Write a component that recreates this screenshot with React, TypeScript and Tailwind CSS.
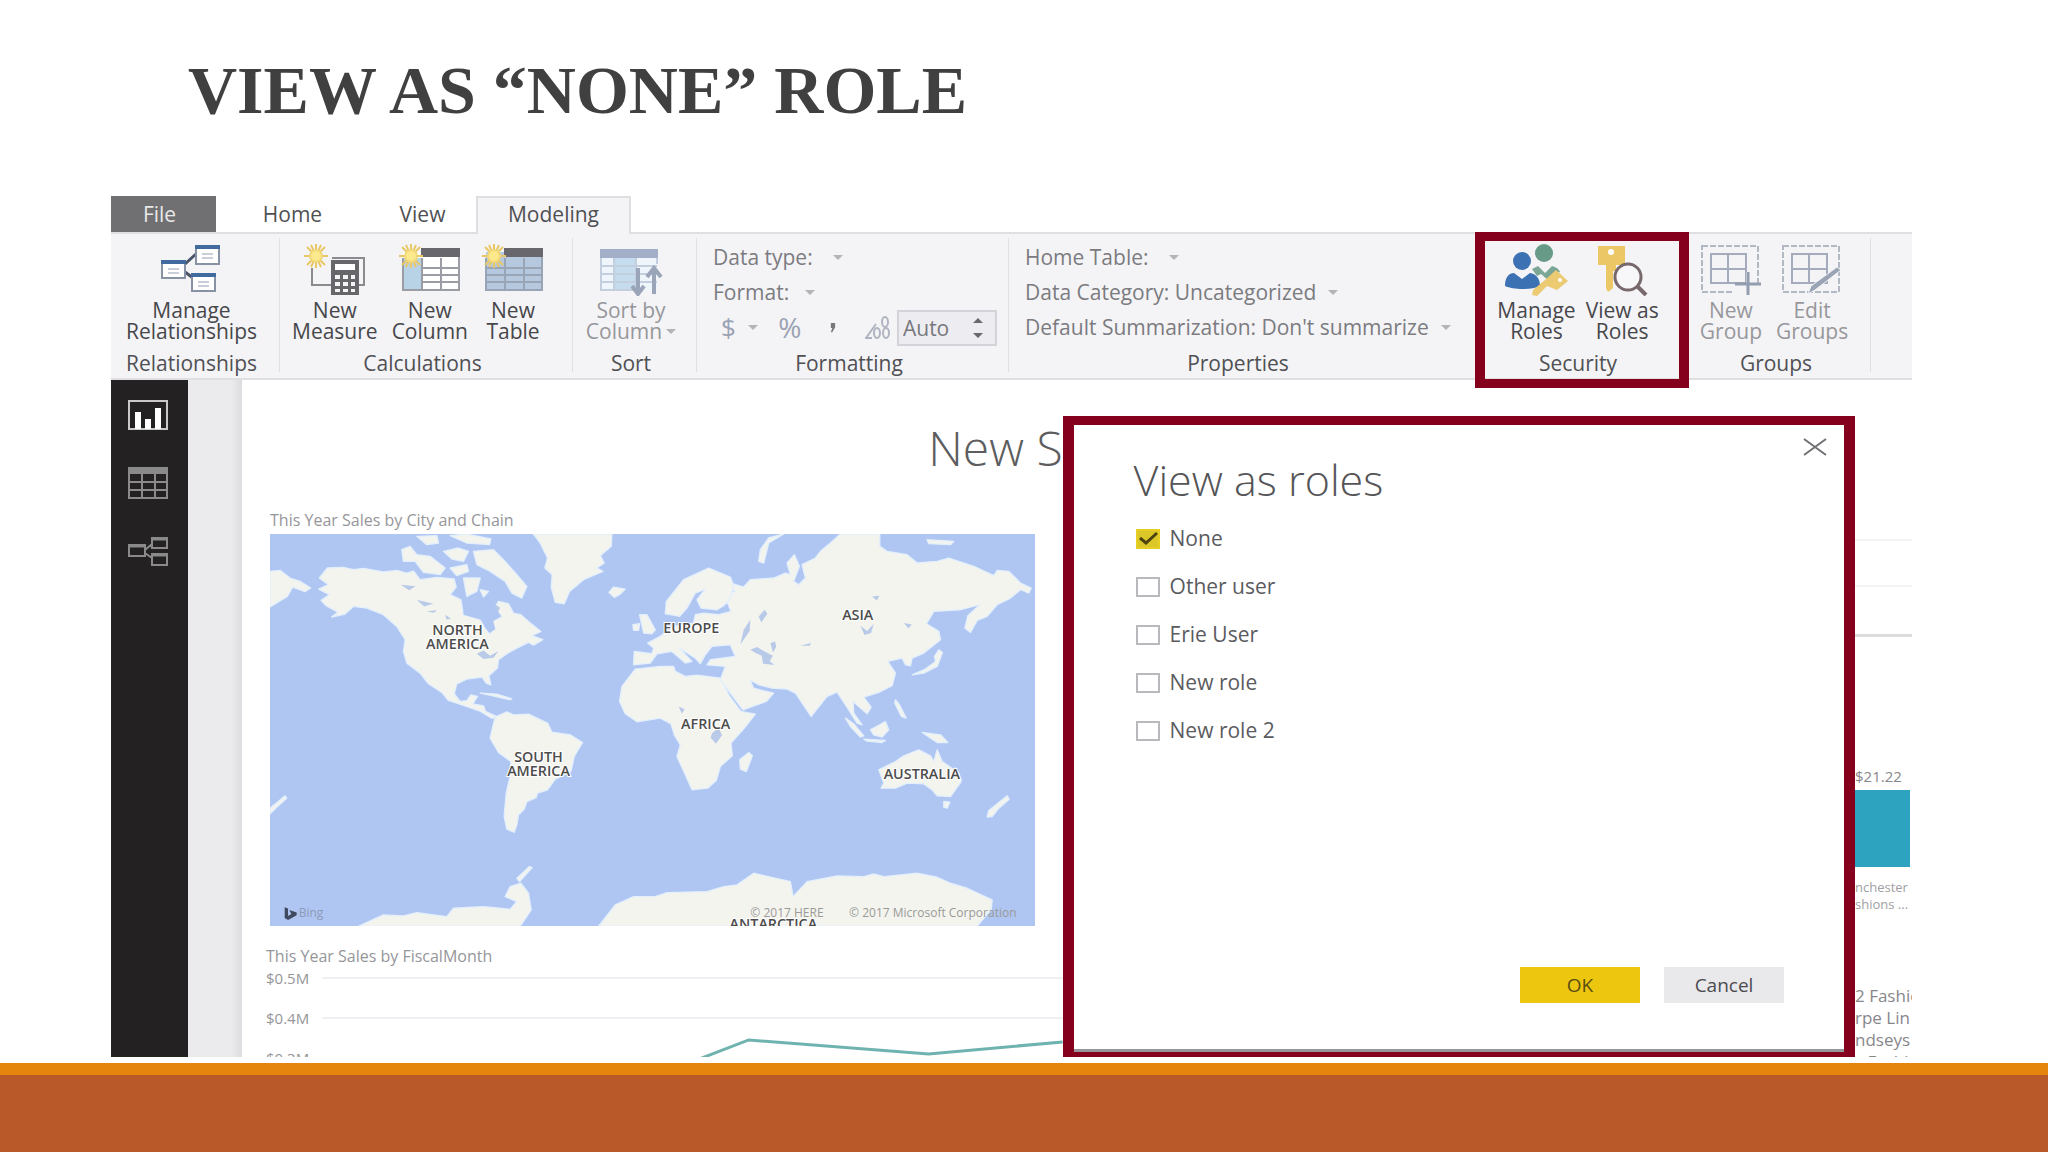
import type { ReactNode } from 'react';

const roles = ['None', 'Other user', 'Erie User', 'New role', 'New role 2'];

function Sun() {
  return (
    <g stroke="#e8c766" strokeWidth="2">
      <path d="M12 0v24M0 12h24M3 3l18 18M21 3L3 21M7 1l10 22M17 1L7 23" />
      <circle cx="12" cy="12" r="6" fill="#fbe98c" stroke="#f0d77a" />
    </g>
  );
}

function RelationshipsIcon() {
  return (
    <svg width="62" height="52" viewBox="0 0 62 52" fill="none" aria-hidden="true">
      <path d="M25 20L36 10M25 28l8 6" stroke="#4a5568" strokeWidth="3" />
      <g fill="#fff" stroke="#8793a5" strokeWidth="2">
        <path d="M36 2h23v18H36zM2 17h23v17H2zM32 30h23v17H32z" />
      </g>
      <path d="M35 1h25v4H35zM1 16h25v4H1zM31 29h25v4H31z" fill="#416a9f" />
      <path d="M42 10h11M42 14h11M8 25h11M8 29h11M38 38h11M38 42h11" stroke="#c9ced8" strokeWidth="2" />
    </svg>
  );
}

function MeasureIcon() {
  return (
    <svg width="62" height="52" viewBox="0 0 62 52" fill="none" aria-hidden="true">
      <path d="M8 24v17h20M28 14h32v27h-5" stroke="#8b8b8f" strokeWidth="2" />
      <path d="M27 16h28v35H27z" fill="#67676b" />
      <path d="M31 20h20v6H31z" fill="#fff" />
      <path d="M31 31h5v4h-5zM39 31h5v4h-5zM47 31h4v4h-4zM31 38h5v4h-5zM39 38h5v4h-5zM47 38h4v4h-4zM31 45h5v3h-5zM39 45h5v3h-5zM47 45h4v3h-4z" fill="#f4f4f5" />
      <Sun />
    </svg>
  );
}

function ColumnIcon() {
  return (
    <svg width="62" height="52" viewBox="0 0 62 52" fill="none" aria-hidden="true">
      <path d="M4 8h56v38H4z" fill="#fff" />
      <path d="M4 14h19v32H4z" fill="#b9d3e6" />
      <path d="M4 14v32h56V8M23 24h37M23 31h37M23 38h37M42 14v32M23 14v32" stroke="#9a9da3" strokeWidth="2" />
      <path d="M22 4h39v9H22z" fill="#67676d" />
      <Sun />
    </svg>
  );
}

function TableIcon() {
  return (
    <svg width="62" height="52" viewBox="0 0 62 52" fill="none" aria-hidden="true">
      <path d="M4 8h56v38H4z" fill="#b5c8de" />
      <path d="M4 14v32h56V8M4 24h56M4 31h56M4 38h56M42 14v32M23 14v32" stroke="#98a5b6" strokeWidth="2" />
      <path d="M22 4h39v9H22z" fill="#67676d" />
      <Sun />
    </svg>
  );
}

function SortIcon() {
  return (
    <svg width="64" height="52" viewBox="0 0 64 52" fill="none" aria-hidden="true">
      <path d="M2 8h56v38H2z" fill="#eef5fb" />
      <path d="M15 14h22v32H15z" fill="#c5dbee" />
      <path d="M2 22h56M2 30h56M2 38h56M15 12v34M37 12v34M2 8v38h34M58 8v12" stroke="#c3cfdf" strokeWidth="2" />
      <path d="M1 5h58v9H1z" fill="#a3afc9" />
      <path d="M39 24v25M33 42l6 8 6-8M55 50V25M48 33l7-9 7 9" stroke="#9aa5ba" strokeWidth="4" />
    </svg>
  );
}

function ManageRolesIcon() {
  return (
    <svg width="64" height="52" viewBox="0 0 64 52" fill="none" aria-hidden="true">
      <circle cx="40" cy="9" r="9" fill="#679a87" />
      <path d="M28 25l6-3 7 7 7-7c4 1 7 3 8 6l-8 3-4 5-7-6-4 2z" fill="#7ba594" />
      <circle cx="18" cy="17" r="9" fill="#3c72b4" />
      <path d="M1 42c0-9 4-13 9-13l8 6 8-6c6 1 10 5 10 13-8 4-27 4-35 0z" fill="#3c72b4" />
      <path d="M52 26l12 11-11 9-10-4-10 10-5-1 1-5 12-10z" fill="#ebca72" />
      <circle cx="56" cy="36" r="2" fill="#fff" />
    </svg>
  );
}

function ViewAsIcon() {
  return (
    <svg width="52" height="52" viewBox="0 0 52 52" fill="none" aria-hidden="true">
      <path d="M2 2h27v19H20v6h-3v17l-5 4-2-4V21H2z" fill="#ebc766" />
      <circle cx="15" cy="8" r="3" fill="#fff" />
      <circle cx="32" cy="33" r="13" fill="#f7f7fa" stroke="#77686c" strokeWidth="3" />
      <path d="M41 42l9 9" stroke="#77686c" strokeWidth="4" />
    </svg>
  );
}

function GroupIcon({ edit = false }: { edit?: boolean }) {
  return (
    <svg width="62" height="52" viewBox="0 0 62 52" fill="none" aria-hidden="true">
      <path d="M2 2h56v46H2z" stroke="#b3b8c5" strokeWidth="2" strokeDasharray="6 2" />
      <path d="M11 10h35v29H11zM28 10v29M11 25h35" stroke="#a3abbc" strokeWidth="2" />
      {edit ? (
        <path d="M27 50l3-8 26-19 4 3-26 20z" fill="#9aa4b5" stroke="#f4f4f6" />
      ) : (
        <>
          <path d="M34 40h28v12H34zM46 28h4v12h-4z" fill="#f4f4f6" />
          <path d="M48 28v23M35 40h26" stroke="#929db0" strokeWidth="3" />
        </>
      )}
    </svg>
  );
}

function Arrow() {
  return (
    <svg width="10" height="5" viewBox="0 0 10 5" className="shrink-0" aria-hidden="true">
      <path d="M0 0h10L5 5z" fill="#b4b4b8" />
    </svg>
  );
}

function Group({ title, children, last = false }: { title: string; children: ReactNode; last?: boolean }) {
  return (
    <div className="relative flex flex-col justify-between pt-1.5 pb-1">
      {children}
      <div className="pr-2 text-center text-[#505054]">{title}</div>
      {!last && <div className="absolute top-1 right-0 bottom-1.5 w-px bg-[#e0e0e3]" />}
    </div>
  );
}

function Tool({ icon, top, bottom, disabled = false, menu = false }: { icon: ReactNode; top: string; bottom: string; disabled?: boolean; menu?: boolean }) {
  return (
    <button className={`flex flex-col items-center pt-1 ${disabled ? 'text-[#97979b]' : 'text-[#47474b]'}`}>
      {icon}
      <span className="mt-1">{top}</span>
      <span className="flex items-center gap-1">
        {bottom}
        {menu && <Arrow />}
      </span>
    </button>
  );
}

function Drop({ text, gap }: { text: string; gap: string }) {
  return (
    <button className={`flex h-[35px] items-center ${gap} whitespace-nowrap text-[#7b7b80]`}>
      {text}
      <Arrow />
    </button>
  );
}

function Ribbon() {
  return (
    <div className="grid h-[148px] grid-cols-[169fr_293fr_124fr_312fr_466fr_214fr_182fr_41fr] border-y-2 border-[#dfdfe2] bg-[#f4f4f6] text-[21px] leading-[21px]">
      <Group title="Relationships">
        <div className="flex justify-center pr-2">
          <Tool icon={<RelationshipsIcon />} top="Manage" bottom="Relationships" />
        </div>
      </Group>
      <Group title="Calculations">
        <div className="flex gap-3.5 px-3">
          <Tool icon={<MeasureIcon />} top="New" bottom="Measure" />
          <Tool icon={<ColumnIcon />} top="New" bottom="Column" />
          <Tool icon={<TableIcon />} top="New" bottom="Table" />
        </div>
      </Group>
      <Group title="Sort">
        <div className="flex justify-center pr-2">
          <Tool icon={<SortIcon />} top="Sort by" bottom="Column" disabled menu />
        </div>
      </Group>
      <Group title="Formatting">
        <div className="pr-3 pl-4">
          <Drop text="Data type:" gap="gap-5" />
          <Drop text="Format:" gap="gap-4" />
          <div className="flex h-[35px] items-center justify-between text-[#9ba2b4]">
            <button className="flex items-center gap-3 pl-2 text-[26px]" aria-label="Currency">
              $ <Arrow />
            </button>
            <button className="text-[28px]" aria-label="Percent">%</button>
            <button className="px-2" aria-label="Thousands separator">
              <svg width="6" height="10" viewBox="0 0 8 14"><path d="M1 0h6v6L3 13H1l2-6H1z" fill="#77777c" /></svg>
            </button>
            <div className="flex items-center gap-1.5">
              <label htmlFor="decimals" aria-label="Decimal places">
                <svg width="27" height="24" viewBox="0 0 27 24" fill="none" stroke="#b0b4c0" strokeWidth="2">
                  <ellipse cx="13" cy="17" rx="3" ry="5" />
                  <ellipse cx="22" cy="17" rx="3" ry="5" />
                  <ellipse cx="21" cy="6" rx="3" ry="5" />
                  <path d="M2 22L12 8M1 22h7" />
                </svg>
              </label>
              <div className="flex h-9 w-[100px] items-center justify-between border-2 border-[#d3d3d9] bg-[#ededf1] pr-3 pl-1">
                <input id="decimals" defaultValue="Auto" className="w-14 min-w-0 bg-transparent text-[#77777c]" />
                <svg width="10" height="20" viewBox="0 0 10 20" fill="#68686d" aria-hidden="true">
                  <path d="M0 5l5-5 5 5zM0 15h10l-5 5z" />
                </svg>
              </div>
            </div>
          </div>
        </div>
      </Group>
      <Group title="Properties" last>
        <div className="px-4">
          <Drop text="Home Table:" gap="gap-5" />
          <Drop text="Data Category: Uncategorized" gap="gap-3" />
          <Drop text="Default Summarization: Don't summarize" gap="gap-3" />
        </div>
      </Group>
      <Group title="Security" last>
        <div className="flex justify-center gap-2.5 pr-2">
          <Tool icon={<ManageRolesIcon />} top="Manage" bottom="Roles" />
          <Tool icon={<ViewAsIcon />} top="View as" bottom="Roles" />
        </div>
        <div className="pointer-events-none absolute inset-x-0 -top-0.5 -bottom-2.5 border-x-10 border-y-9 border-[#85001d]" />
      </Group>
      <Group title="Groups">
        <div className="flex justify-center gap-3.5 pr-3">
          <Tool icon={<GroupIcon />} top="New" bottom="Group" disabled />
          <Tool icon={<GroupIcon edit />} top="Edit" bottom="Groups" disabled />
        </div>
      </Group>
    </div>
  );
}

function WorldMap() {
  return (
    <svg viewBox="60 103 2292 1176" className="block w-full bg-[#afc6f2]" role="img" aria-label="World map">
      <g fill="#f4f4ef" stroke="#e3effb" strokeWidth="4" strokeLinejoin="round">
        <path d="M232 205L280 203 310 210 340 206 400 217 440 212 470 220 490 214 510 240 560 233 612 238 618 262 600 285 632 300 640 345 690 360 705 385 718 402 735 388 728 365 755 350 735 322 745 305 775 312 790 340 812 345 835 365 872 395 845 408 878 420 850 436 835 428 800 445 770 462 745 480 742 505 716 528 722 555 708 550 696 532 650 538 620 552 612 582 630 605 650 603 662 585 682 590 668 612 700 618 706 635 738 650 726 656 690 634 640 617 595 602 575 578 535 552 510 520 470 490 460 455 465 420 440 380 400 345 350 325 310 320 285 343 245 352 264 337 228 318 213 302 238 285 206 268 235 255 208 235Z" />
        <path d="M735 652L770 636 790 645 835 643 892 670 905 697 960 705 997 728 972 770 962 815 915 838 892 870 862 880 858 893 830 905 822 928 805 945 800 975 792 997 770 988 762 950 768 880 780 830 782 785 745 758 720 715 728 680Z" />
        <path d="M850 103H1085L1083 140 1050 168 1062 190 1040 205 1058 215 1000 240 958 275 942 312 915 308 903 262 906 225 884 205 892 175 870 130Z" />
        <path d="M1076 278L1090 262 1125 268 1110 283 1092 293Z" />
        <path d="M60 215L90 212 120 235 150 245 182 265 165 276 128 262 112 290 60 322Z" />
        <path d="M455 150L480 140 500 165 540 170 585 205 570 225 520 218 495 185 460 185ZM500 110L560 108 565 130 530 135ZM600 108L650 103 722 118 718 135 650 130ZM580 155L625 145 655 155 640 185 605 178ZM670 155L730 150 760 180 800 225 830 260 815 295 785 280 765 245 720 215 680 195ZM640 235L690 235 680 275 650 290ZM600 205L650 195 655 215 620 228ZM690 270L715 275 700 292Z" />
        <path d="M60 925L85 905 105 888 110 895 80 922 60 942ZM1168 345L1190 345 1215 390 1205 402 1180 400ZM1148 375L1168 372 1165 392 1150 392Z" />
        <path d="M690 580l50 3 45 14-5 3-45-10z" />
        <path d="M325 1279L400 1245 460 1248 500 1238 590 1250 610 1225 700 1220 780 1228 800 1205 765 1190 780 1160 812 1150 835 1180 843 1230 810 1279ZM800 1135l38-35 8 3-38 42z" />
        <path d="M1045 1279L1095 1215 1150 1190 1215 1190 1250 1178 1370 1175 1420 1160 1460 1155 1510 1120 1620 1145 1628 1190 1670 1145 1760 1128 1840 1130 1870 1122 1900 1130 2000 1120 2060 1132 2100 1150 2150 1165 2225 1200 2222 1228 2180 1279Z" />
      </g>
      <g transform="translate(1170 0)" fill="#f4f4ef" stroke="#e3effb" strokeWidth="4" strokeLinejoin="round">
        <path d="M-15 508L60 500 100 500 105 515 135 530 170 526 240 535 268 590 302 635 345 643 312 685 272 730 276 768 240 800 228 842 202 865 155 870 135 825 110 770 120 735 102 705 92 672 60 655 -10 666 -45 642 -62 605 -55 560Z" />
        <path d="M-20 495L-18 455 35 462 40 445 22 430 60 410 100 380 160 370 165 345 190 340 235 345 272 335 258 300 265 285 285 275 262 262 240 240 310 262 330 240 400 235 435 220 450 225 440 190 462 165 477 200 460 245 475 255 495 235 485 195 525 175 540 155 570 130 600 103H718L718 140 740 155 800 165 830 190 890 185 925 175 1000 200 1060 228 1070 212 1105 215 1140 250 1172 265 1165 280 1140 270 1110 295 1070 315 1040 350 1010 362 990 398 973 385 982 348 1018 315 960 330 880 335 858 372 895 395 900 420 850 460 815 475 810 498 795 495 785 475 742 485 765 520 755 558 715 578 670 592 692 622 680 642 655 620 638 605 640 640 665 675 650 670 625 630 590 577 560 590 512 650 487 612 465 580 440 568 395 565 355 555 328 540 340 565 365 572 400 580 378 605 308 630 270 580 240 540 255 500 200 495 210 480 285 470 270 435 215 440 195 465 180 492 165 475 115 443 155 485 135 490 95 455 50 462 30 490Z" />
        <path d="M75 342L78 305 130 240 205 205 270 232 280 258 268 300 250 318 230 330 182 325 170 300 195 268 165 280 140 325 118 350 95 345Z" />
        <path d="M355 185L360 150 385 115 430 103 385 130 370 190ZM860 120L940 125 930 135 865 132ZM765 600l12 15 20 40-14-5-20-40z" />
        <path d="M615 655L640 672 670 708 660 712 630 680ZM690 690L735 665 745 690 725 712 700 705ZM670 718L735 722 725 728 680 724ZM845 698L900 705 922 728 890 728ZM815 525L855 508 885 485 882 470 895 450 906 458 890 500 850 520Z" />
        <path d="M722 865L730 850 715 810 765 785 790 768 835 750 870 768 880 785 890 750 905 785 955 820 962 845 930 890 890 888 875 870 850 852 800 850 765 865ZM910 905l18 2-8 18-10-3z" />
        <path d="M300 808L298 780 325 758 336 768 318 815ZM1040 952L1045 932 1100 888 1106 898 1075 925 1055 950Z" />
      </g>
      {/* inland water */}
      <g fill="#b9cae8">
        <path d="M1500 450l20 -8 20 12 28 14-10 16 14 12-34-4-4-24-18-8zM1560 430l14-5 4 15-10 18zM1480 390l20-30-2 34-28 40zM1525 350l18-20 8 12-18 26z" />
        <path d="M640 300l40-8 40 12 30 20-15 30-22 8-30-8-35-20zM452 255l45 5-20 12zM500 300l50 12-28 8zM530 335l30-4-8 8zM680 462l20-10 20 16 25-14-15 20-30 4zM585 345l18 12-14 2z" />
        <path d="M1830 378l20 16 20-22-8 28-20 6zM1385 700l20-16 10 22-18 26-16-18zM1285 620l18 8-8 14zM1650 438l32-8-4 8zM1960 370l24 4-10 12zM1865 290l22-2-8 14z" />
      </g>
      <path d="M642 298l46-6 45 14 2 16 18 28-24 14 6 24-17 12-14-18-10-22-54-15z" fill="#afc6f2" />
      <g className="font-[Open_Sans,sans-serif]" fill="#4c4c4c" stroke="#fff" strokeWidth="6" paintOrder="stroke" fontSize="43" fontWeight="600" textAnchor="middle">
        <text x="622" y="407">NORTH</text>
        <text x="622" y="448">AMERICA</text>
        <text x="865" y="788">SOUTH</text>
        <text x="865" y="829">AMERICA</text>
        <text x="1323" y="401">EUROPE</text>
        <text x="1366" y="687">AFRICA</text>
        <text x="1822" y="361">ASIA</text>
        <text x="2014" y="837">AUSTRALIA</text>
        <text x="1569" y="1286">ANTARCTICA</text>
      </g>
      <g className="font-[Open_Sans,sans-serif]" fill="#9a9a98" fontSize="36">
        <text x="1500" y="1250">© 2017 HERE</text>
        <text x="1796" y="1250">© 2017 Microsoft Corporation</text>
        <text x="146" y="1252" fill="#8e9ab8">Bing</text>
      </g>
      <path d="M104 1222l10 4v22l10-6-6-12 22 8v8l-26 14-10-6z" fill="#3f4a60" />
    </svg>
  );
}

function SideIcons() {
  return (
    <nav className="flex w-[77px] shrink-0 flex-col items-center gap-9 bg-[#232122] pt-5 pr-1">
      <button aria-label="Report">
        <svg width="40" height="31" viewBox="0 0 40 31" fill="none">
          <path d="M1 1h38v28H1z" stroke="#c9c9c9" strokeWidth="2" />
          <path d="M7 12h6v17H7zM17 19h6v10h-6zM27 8h6v21h-6z" fill="#fff" />
        </svg>
      </button>
      <button aria-label="Data">
        <svg width="40" height="33" viewBox="0 0 40 33" fill="none">
          <path d="M1 1h38v30H1zM1 15h38M1 23h38M14 7v24M27 7v24" stroke="#8a8a8a" strokeWidth="2" />
          <path d="M0 0h40v7H0z" fill="#8a8a8a" />
        </svg>
      </button>
      <button aria-label="Relationships">
        <svg width="40" height="31" viewBox="0 0 40 31" fill="none" stroke="#8a8a8a" strokeWidth="2">
          <path d="M1 9h16v11H1zM24 2h15v10H24zM24 18h15v11H24zM17 14l7-6M17 17l7 5" />
          <path d="M1 10h16M24 3h15M24 19h15" strokeWidth="3" />
        </svg>
      </button>
    </nav>
  );
}

function RolesDialog() {
  return (
    <section role="dialog" aria-labelledby="roles-title" className="relative mt-9 flex w-[44%] shrink-0 flex-col border-x-11 border-t-9 border-b-5 border-[#85001d] bg-white">
      <div className="flex flex-1 flex-col border-b-3 border-[#96959c] px-[60px] pt-5">
        <button aria-label="Close" className="absolute top-3 right-4">
          <svg width="26" height="20" viewBox="0 0 26 20" fill="none" stroke="#707074" strokeWidth="2">
            <path d="M2 2l22 16M24 2L2 18" />
          </svg>
        </button>
        <h2 id="roles-title" className="text-[43px] leading-[70px] font-light text-[#555558]">View as roles</h2>
        <div className="flex flex-col">
          {roles.map((role) => (
            <label key={role} className="flex h-12 items-center gap-2.5 text-[21px] text-[#5b5b5f]">
              <span className="relative ml-0.5 flex">
                <input type="checkbox" defaultChecked={role === 'None'} className="peer h-5 w-6 appearance-none border-2 border-[#b9b9bd] bg-white checked:border-[#e6cf22] checked:bg-[#dcc728]" />
                <svg width="24" height="20" viewBox="0 0 24 20" fill="none" className="pointer-events-none absolute hidden peer-checked:block" aria-hidden="true">
                  <path d="M4 9l6 5L21 4" stroke="#4d4310" strokeWidth="3" />
                </svg>
              </span>
              {role}
            </label>
          ))}
        </div>
        <div className="mt-auto mb-[46px] flex justify-end gap-6 text-[19px]">
          <button className="h-9 w-[120px] bg-[#ecc60f] text-[#5a4d12]">OK</button>
          <button className="h-9 w-[120px] bg-[#e9e8eb] text-[#4c4c50]">Cancel</button>
        </div>
      </div>
    </section>
  );
}

function Report() {
  return (
    <div className="flex min-h-0 flex-1 overflow-hidden">
      <SideIcons />
      <div className="w-[54px] shrink-0 bg-linear-to-r from-[#ebeaed] from-80% to-[#dcdbdf]" />
      <main className="flex min-w-0 flex-1 flex-col overflow-hidden text-[#96969a]">
        <h2 className="pt-9 pb-5 text-right text-[48px] leading-[64px] font-light whitespace-nowrap text-[#5d5d60]">New S</h2>
        <section className="px-7">
          <h3 className="pt-2 pb-0.5 text-[16px] leading-6">This Year Sales by City and Chain</h3>
          <WorldMap />
        </section>
        <section className="pt-[18px] pl-6">
          <h3 className="text-[16px] leading-6">This Year Sales by FiscalMonth</h3>
          <div className="relative -mt-2.5 text-[15px] leading-10">
            {['$0.5M', '$0.4M', '$0.3M'].map((tick) => (
              <div key={tick} className="flex h-10 items-center gap-3">
                <span className="w-11">{tick}</span>
                <span className="h-0.5 flex-1 bg-[#f1eff3]" />
              </div>
            ))}
            <svg viewBox="0 0 797 110" className="absolute top-0 left-0 w-full" fill="none" aria-hidden="true">
              <path d="M405 112L483 82 663 96 797 84" stroke="#6fb3b0" strokeWidth="3" />
            </svg>
          </div>
        </section>
      </main>
      <RolesDialog />
      <aside className="flex w-[57px] shrink-0 flex-col overflow-hidden whitespace-nowrap text-[#87878b]">
        <div className="mt-[159px] h-12 shrink-0 border-y-2 border-[#f3f3f5]" />
        <div className="h-[50px] shrink-0 border-b-3 border-[#dcdbde]" />
        <div className="mt-[125px] text-[15px] leading-7">$21.22</div>
        <div className="mr-0.5 h-[77px] shrink-0 bg-[#2ea3bf]" />
        <div className="pt-3 text-[13px] leading-[17px] text-[#a0a0a4]">
          <p>nchester</p>
          <p>shions ...</p>
        </div>
        <div className="mt-[72px] text-[17px] leading-[22px]">
          <p>2 Fashic</p>
          <p>rpe Lin</p>
          <p>ndseys</p>
          <p>s Fashi</p>
        </div>
      </aside>
    </div>
  );
}

export default function App() {
  return (
    <div className="flex h-screen flex-col overflow-hidden bg-white font-['Open_Sans','Noto_Sans',sans-serif]">
      <h1 className="pt-10 pb-14 pl-[188px] font-['Liberation_Serif',serif] text-[68px] leading-[100px] font-bold text-[#404040]">VIEW AS “NONE” ROLE</h1>

      <div className="mr-[136px] ml-[111px] flex min-h-0 flex-1 flex-col">
        <nav className="flex h-9 items-stretch text-[21px] leading-[21px] text-[#505054]">
          <button className="w-[105px] bg-[#707072] pr-2 text-[#e8e8e8]">File</button>
          <button className="w-[153px]">Home</button>
          <button className="w-[107px]">View</button>
          <button className="relative z-10 -mb-0.5 w-[155px] border-2 border-b-0 border-[#dfdfe2] bg-[#f4f4f6] pb-1">Modeling</button>
        </nav>
        <Ribbon />
        <Report />
      </div>

      <footer className="mt-1.5 h-[89px] shrink-0 border-t-12 border-[#e5850e] bg-[#b95828]" />
    </div>
  );
}
